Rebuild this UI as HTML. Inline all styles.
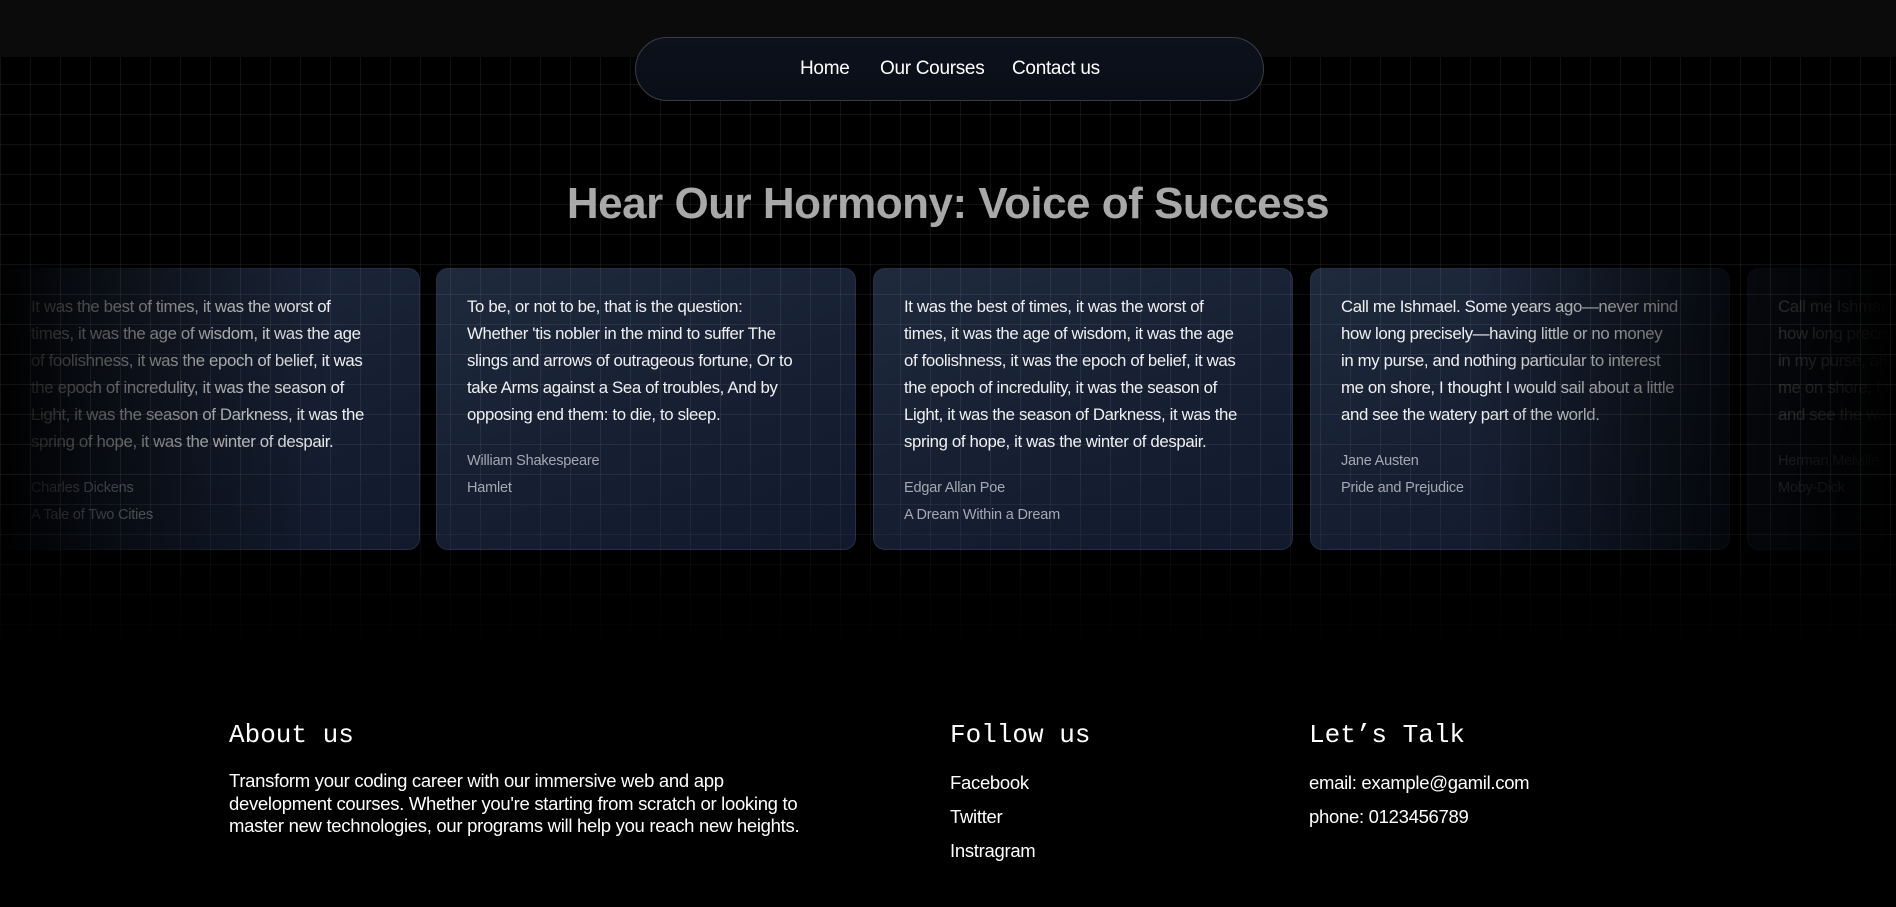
<!DOCTYPE html>
<html><head><meta charset="utf-8"><style>
*{margin:0;padding:0;box-sizing:border-box}
body{width:1896px;height:907px;background:#000;overflow:hidden;position:relative;font-family:"Liberation Sans",sans-serif;color:#fff}
.top{position:absolute;left:0;top:0;width:1896px;height:57px;background:#0b0b0b}
.grid{position:absolute;left:0;top:57px;width:1896px;height:601px;z-index:5;pointer-events:none;
background-image:linear-gradient(to right,rgba(255,255,255,.065) 1px,transparent 1px),linear-gradient(to bottom,rgba(255,255,255,.065) 1px,transparent 1px);
background-size:30px 30px;background-position:0 -3px;
-webkit-mask-image:linear-gradient(to bottom,#000 0%,#000 70%,transparent 100%)}
.nav{position:absolute;left:635px;top:37px;width:629px;height:64px;border-radius:32px;border:1px solid #3a3d44;background:linear-gradient(#0c111c,#0a0e17);z-index:6}
.nav span{position:absolute;top:20px;font-size:19px;letter-spacing:-0.3px;color:#fff}
h1{position:absolute;left:0;width:1896px;top:179px;text-align:center;font-size:44px;font-weight:bold;color:#a8a8a8;letter-spacing:-0.5px;z-index:2}
.clip{position:absolute;left:0;top:268px;width:1896px;height:283px;overflow:hidden;z-index:1}
.card{position:absolute;top:0;width:420px;height:282px;border-radius:12px;background:linear-gradient(160deg,#1f2a3d 0%,#172033 50%,#111a2c 100%);border:1px solid #253045;padding:24px 30px;overflow:hidden}
.q{font-size:16.8px;line-height:27px;letter-spacing:-0.35px;color:#f0f0f0;white-space:nowrap}
.a{margin-top:20px;font-size:14.5px;line-height:27px;color:#a4a8b0;letter-spacing:-0.2px;white-space:nowrap}
.fadeL{position:absolute;left:0;top:260px;width:330px;height:300px;background:linear-gradient(to right,#000 0%,rgba(0,0,0,.7) 25%,rgba(0,0,0,0) 100%);z-index:3}
.fadeR{position:absolute;right:0;top:260px;width:420px;height:300px;background:linear-gradient(to left,#000 0%,rgba(0,0,0,.75) 40%,rgba(0,0,0,0) 100%);z-index:3}
.fh{position:absolute;top:720px;font-family:"Liberation Mono",monospace;font-size:26px;color:#fff}
.ft{position:absolute;font-size:18.5px;letter-spacing:-0.3px;color:#fff}
</style></head><body>
<div class="top"></div>
<div class="grid"></div>
<div class="nav"><span style="left:164px">Home</span><span style="left:244px">Our Courses</span><span style="left:376px">Contact us</span></div>
<h1>Hear Our Hormony: Voice of Success</h1>
<div class="clip">
<div class="card" style="left:0;border-radius:0 12px 12px 0"><div class="q">It was the best of times, it was the worst of<br>times, it was the age of wisdom, it was the age<br>of foolishness, it was the epoch of belief, it was<br>the epoch of incredulity, it was the season of<br>Light, it was the season of Darkness, it was the<br>spring of hope, it was the winter of despair.</div><div class="a">Charles Dickens<br>A Tale of Two Cities</div></div>
<div class="card" style="left:436px"><div class="q">To be, or not to be, that is the question:<br>Whether 'tis nobler in the mind to suffer The<br>slings and arrows of outrageous fortune, Or to<br>take Arms against a Sea of troubles, And by<br>opposing end them: to die, to sleep.</div><div class="a">William Shakespeare<br>Hamlet</div></div>
<div class="card" style="left:873px"><div class="q">It was the best of times, it was the worst of<br>times, it was the age of wisdom, it was the age<br>of foolishness, it was the epoch of belief, it was<br>the epoch of incredulity, it was the season of<br>Light, it was the season of Darkness, it was the<br>spring of hope, it was the winter of despair.</div><div class="a">Edgar Allan Poe<br>A Dream Within a Dream</div></div>
<div class="card" style="left:1310px"><div class="q">Call me Ishmael. Some years ago—never mind<br>how long precisely—having little or no money<br>in my purse, and nothing particular to interest<br>me on shore, I thought I would sail about a little<br>and see the watery part of the world.</div><div class="a">Jane Austen<br>Pride and Prejudice</div></div>
<div class="card" style="left:1747px;width:149px;border-radius:12px 0 0 12px;border-right:none"><div class="q">Call me Ishmael. Some years ago—never mind<br>how long precisely—having little or no money<br>in my purse, and nothing particular to interest<br>me on shore, I thought I would sail about a little<br>and see the watery part of the world.</div><div class="a">Herman Melville<br>Moby-Dick</div></div>
</div>
<div class="fadeL"></div><div class="fadeR"></div>

<div class="fh" style="left:229px">About us</div>
<div class="ft" style="left:229px;top:770px;line-height:22.5px;width:620px">Transform your coding career with our immersive web and app<br>development courses. Whether you're starting from scratch or looking to<br>master new technologies, our programs will help you reach new heights.</div>
<div class="fh" style="left:950px">Follow us</div>
<div class="ft" style="left:950px;top:766px;line-height:34px">Facebook<br>Twitter<br>Instragram</div>
<div class="fh" style="left:1309px">Let’s Talk</div>
<div class="ft" style="left:1309px;top:766px;line-height:34px">email: example@gamil.com<br>phone: 0123456789</div>
</body></html>
